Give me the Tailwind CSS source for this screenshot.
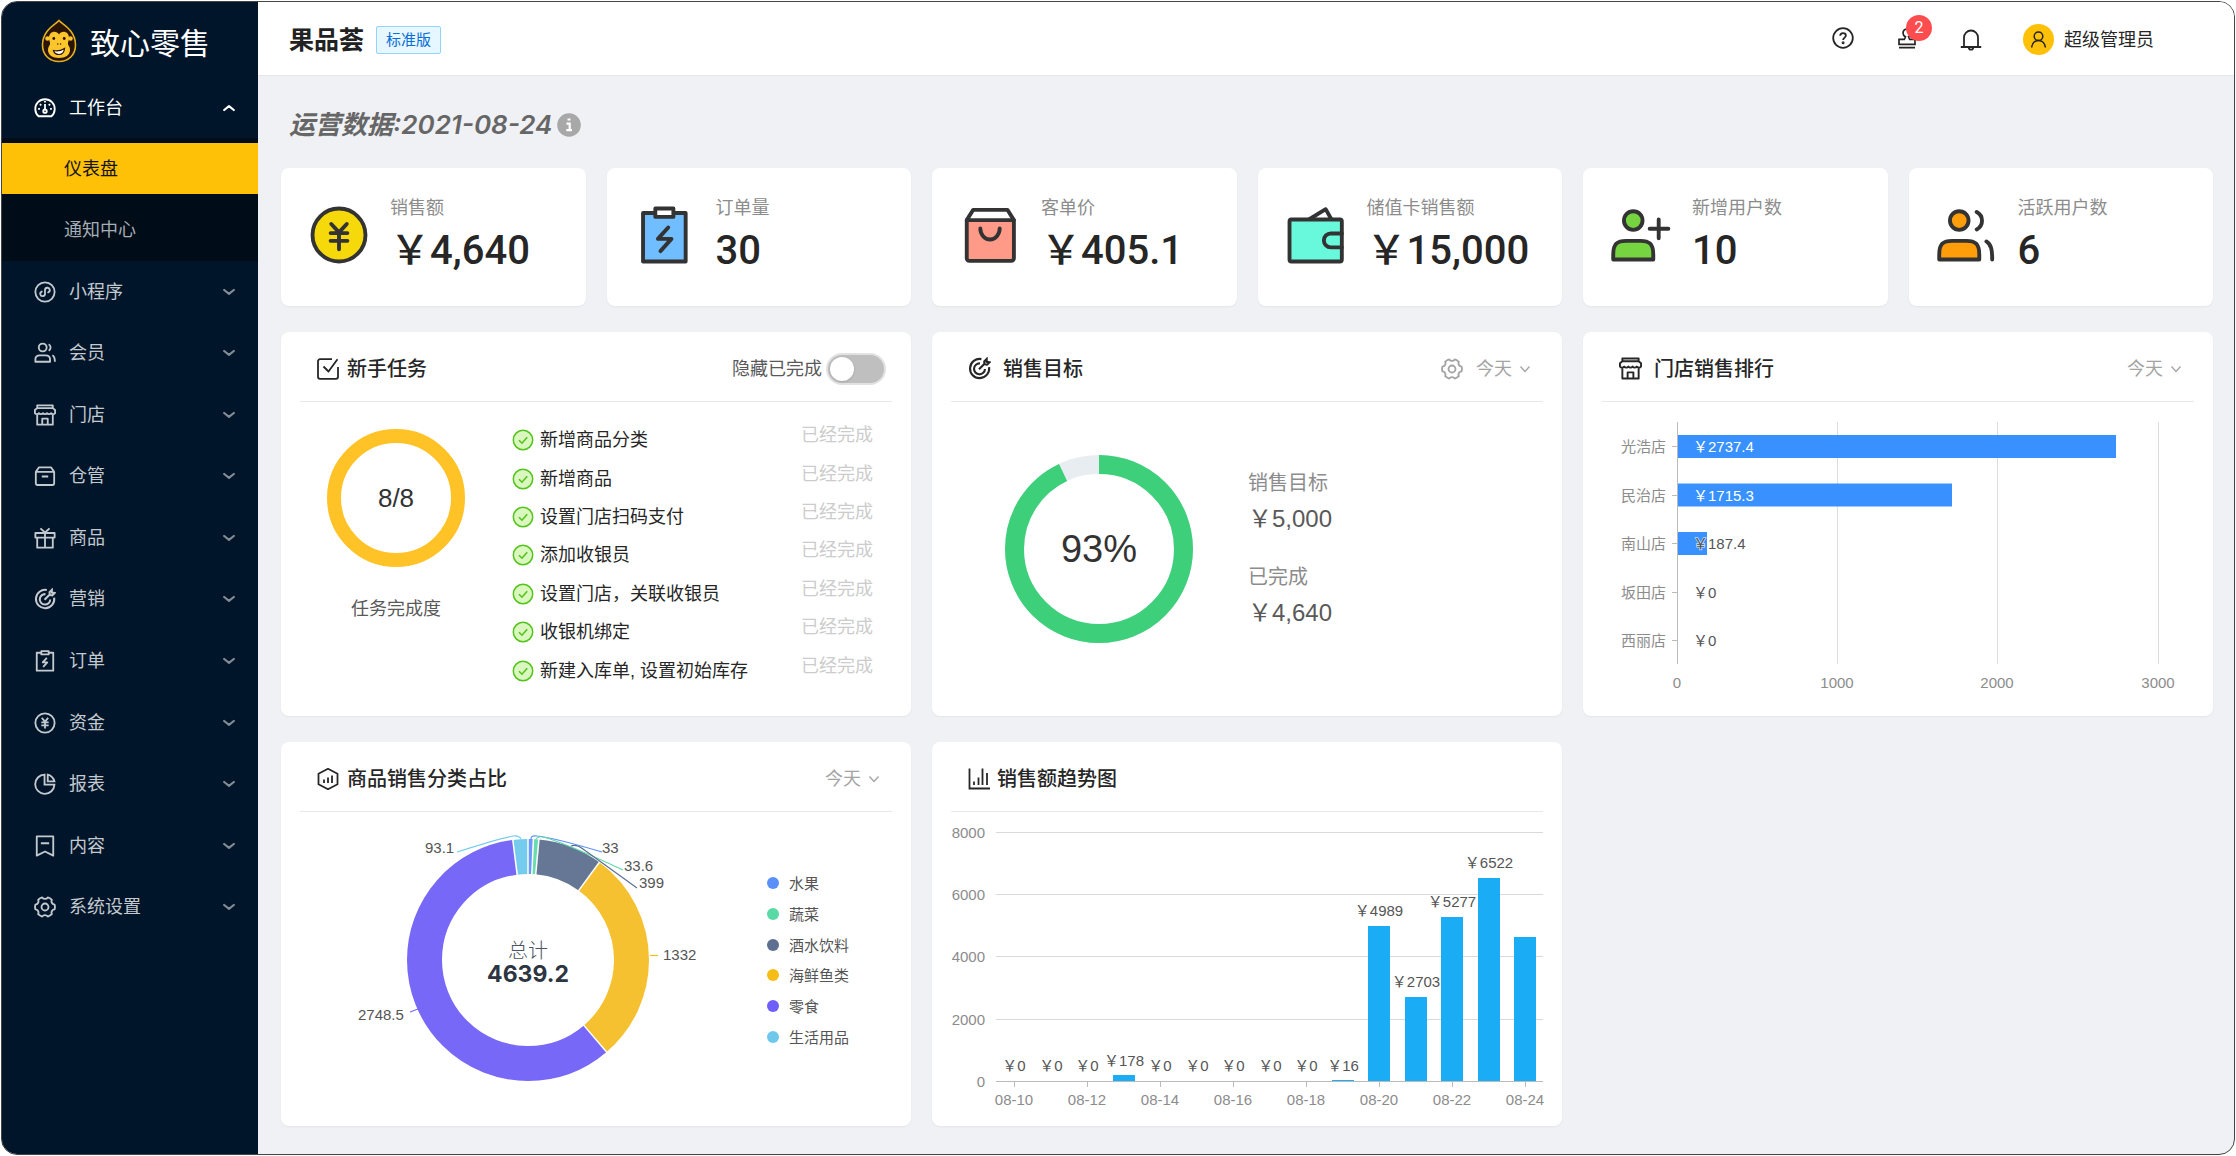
<!DOCTYPE html>
<html lang="zh-CN">
<head>
<meta charset="utf-8">
<meta name="viewport" content="width=device-width, initial-scale=1">
<title>致心零售 - 仪表盘</title>
<script src="https://cdn.jsdelivr.net/npm/@tailwindcss/browser@4"></script>
</head>
<body class="flex min-h-screen bg-white p-px font-['Liberation_Sans','Noto_Sans_CJK_SC',sans-serif] text-[18px] leading-7 text-[#262626]">

<!-- Icon sprite -->
<svg class="hidden" aria-hidden="true">
  <defs>
    <symbol id="i-down" viewBox="0 0 12 12"><path d="M1.200 4l4.800 3.800L10.800 4" fill="none" stroke="currentColor" stroke-width="2.200" stroke-linecap="round" stroke-linejoin="round"/></symbol>
    <symbol id="i-thin-down" viewBox="0 0 12 12"><path d="M1.500 3.500L6 8.500l4.500-5" fill="none" stroke="currentColor" stroke-width="1.300"/></symbol>
    <symbol id="i-dash" viewBox="0 0 24 24"><g fill="none" stroke="currentColor" stroke-width="2"><path d="M5 21a10.600 10.600 0 1 1 14 0z" stroke-linejoin="round"/><circle cx="12" cy="15.500" r="1.900"/><path d="M12 13.500V7.500"/><path d="M12 4.300v1.700M4.500 13h2M17.500 13h2M6.500 7.800l1.400 1.400M17.500 7.800l-1.400 1.400"/></g></symbol>
    <symbol id="i-mini" viewBox="0 0 24 24"><g fill="none" stroke="currentColor" stroke-width="2"><circle cx="12" cy="12" r="10.500"/><path d="M8.500 11.500a2.600 2.600 0 1 0 3.500 2.400V10a2.600 2.600 0 1 1 3.500 2.400" stroke-linecap="round"/></g></symbol>
    <symbol id="i-users" viewBox="0 0 24 24"><g fill="none" stroke="currentColor" stroke-width="2"><circle cx="9.500" cy="6" r="4.300"/><path d="M1.500 21.500v-2.500c0-3.500 1.500-4.500 5-4.500h6c3.500 0 5 1 5 4.500v2.500z" stroke-linejoin="round"/><path d="M16 2.500c2.800 1.500 2.800 5.500 0 7M20 14.500c2 1 2.800 3 2.800 7"/></g></symbol>
    <symbol id="i-store" viewBox="0 0 24 24"><g fill="none" stroke="currentColor" stroke-width="2" stroke-linejoin="round"><path d="M3.500 11v11.500h17V11M3.500 1.500h17v3h-17zM3.500 4.500L1 6.500v3.500c1 1.500 3 1.500 4.400 0 1.200 1.500 3.200 1.500 4.400 0 1.200 1.500 3.200 1.500 4.400 0 1.200 1.500 3.200 1.500 4.400 0 1.400 1.500 3.400 1.500 4.400 0V6.500l-2.500-2M9 22.500V16h6v6.500"/></g></symbol>
    <symbol id="i-box" viewBox="0 0 24 24"><g fill="none" stroke="currentColor" stroke-width="2" stroke-linejoin="round"><path d="M2 7.500h20V20c0 1-.5 1.800-1.800 1.800H3.800C2.500 21.800 2 21 2 20zM2 7.500l3.500-5h13l3.500 5M8.500 12.500h7"/></g></symbol>
    <symbol id="i-gift" viewBox="0 0 24 24"><g fill="none" stroke="currentColor" stroke-width="2" stroke-linejoin="round"><path d="M1.500 6.500h21v5h-21zM3.500 11.500h17v11h-17zM12 6.500v16M7 1.500l5 4.500 5-4.500"/></g></symbol>
    <symbol id="i-target" viewBox="0 0 24 24"><g fill="none" stroke="currentColor" stroke-width="2.200"><path d="M14 2.200A10 10 0 1 0 22 10.500"/><path d="M12.500 6.700a5.700 5.700 0 1 0 5.200 5.800"/><path d="M11.500 12.800l6-6M17 7.500V4.500l2.500-2.500v3l3 .5-2.500 2.500z"/></g></symbol>
    <symbol id="i-order" viewBox="0 0 24 24"><g fill="none" stroke="currentColor" stroke-width="2" stroke-linejoin="round"><path d="M8 3H3v19.500h18V3h-5M8 1.300h8v3.500H8zM14 8.500l-4.500 5h5L10 18.500"/></g></symbol>
    <symbol id="i-yen" viewBox="0 0 24 24"><g fill="none" stroke="currentColor" stroke-width="2"><circle cx="12" cy="12" r="10.500"/><path d="M8.500 6.500L12 10.500l3.500-4M8 11.300h8M8 14.600h8M12 10.500V18"/></g></symbol>
    <symbol id="i-pie" viewBox="0 0 24 24"><g fill="none" stroke="currentColor" stroke-width="2"><path d="M11.500 1.700A10.500 10.500 0 1 0 22.300 12.700H11.500z"/><path d="M15 1.800V9.200h7.300C21.300 5.500 18.700 2.800 15 1.800z"/></g></symbol>
    <symbol id="i-mark" viewBox="0 0 24 24"><g fill="none" stroke="currentColor" stroke-width="2" stroke-linejoin="round"><path d="M3 1.500h18v21l-9-4.500-9 4.500zM7.500 9h9"/></g></symbol>
    <symbol id="i-gear" viewBox="0 0 24 24"><g fill="none" stroke="currentColor" stroke-width="2" stroke-linejoin="round"><path d="M22.500 9.400A10.800 10.800 0 0 1 22.500 14.600A3.600 3.600 0 0 0 19.500 19.800A10.800 10.800 0 0 1 15 22.400A3.600 3.600 0 0 0 9 22.400A10.800 10.800 0 0 1 4.500 19.800A3.600 3.600 0 0 0 1.500 14.600A10.800 10.800 0 0 1 1.500 9.400A3.600 3.600 0 0 0 4.500 4.200A10.800 10.800 0 0 1 9 1.600A3.600 3.600 0 0 0 15 1.600A10.800 10.800 0 0 1 19.500 4.200A3.600 3.600 0 0 0 22.500 9.400z"/><circle cx="12" cy="12" r="3.800"/></g></symbol>
    <symbol id="i-ok" viewBox="0 0 22 22"><circle cx="11" cy="11" r="9.700" fill="#d9f7be" stroke="#52c41a" stroke-width="1.500"/><path d="M7 11.200l3 3 5.200-6" fill="none" stroke="#52c41a" stroke-width="1.600"/></symbol>
  </defs>
</svg>

<div class="flex flex-1 overflow-hidden rounded-2xl border border-[#444] bg-[#f0f1f5]">

  <!-- Sidebar -->
  <aside class="w-64 shrink-0 bg-[#001529] text-[#c4c9cf]">
    <a href="#" class="flex h-[75px] items-start gap-[13px] pl-[39px] pt-[17px]">
      <svg class="h-11 w-9 shrink-0" viewBox="0 0 36 44" aria-hidden="true">
        <path d="M18 1.500C22 6 34.500 11 34.500 26 34.500 36 27.500 42.500 18 42.500S1.500 36 1.500 26C1.500 11 14 6 18 1.500z" fill="#2b1403" stroke="#e3b022" stroke-width="1.600"/>
        <circle cx="6.500" cy="19.500" r="2.300" fill="#fbc52c"/><circle cx="29.500" cy="19.500" r="2.300" fill="#fbc52c"/>
        <path d="M18 15.500c2.500-4.500 10-3.500 10 3.500 0 3-1.500 4-1 6.500 1 2 2 3 2 5.500 0 5-4.500 8-11 8S7 36 7 31c0-2.500 1-3.500 2-5.500.5-2.500-1-3.500-1-6.500 0-7 7.500-8 10-3.500z" fill="#fbc52c"/>
        <circle cx="12.800" cy="19.500" r="1.400" fill="#2b1403"/><circle cx="23.200" cy="19.500" r="1.400" fill="#2b1403"/>
        <circle cx="16.800" cy="25" r=".7" fill="#2b1403"/><circle cx="19.600" cy="25" r=".7" fill="#2b1403"/>
        <path d="M12.500 31.500c4 1 7.500.2 11-2-.3 3.800-2.500 6-5.500 6-2.800 0-4.800-1.300-5.500-4z" fill="#fff" stroke="#2b1403" stroke-width="1.200"/>
      </svg>
      <span class="mt-[5px] whitespace-nowrap text-[30px] leading-10 text-white">致心零售</span>
    </a>
    <nav aria-label="主菜单">
      <button type="button" class="flex h-[61px] w-full items-center gap-[13px] pl-8 pr-[23px] text-white" aria-expanded="true">
        <svg class="size-[22px]"><use href="#i-dash"/></svg><span>工作台</span><svg class="ml-auto size-3 rotate-180"><use href="#i-down"/></svg>
      </button>
      <div class="flex flex-col gap-[10px] bg-[#000c17] pb-[6px] pt-[5px]">
        <a href="#" class="flex h-[51px] items-center bg-[#ffc107] pl-[62px] text-[#141414]" aria-current="page">仪表盘</a>
        <a href="#" class="flex h-[51px] items-center pl-[62px] text-[#a6adb4]">通知中心</a>
      </div>
      <div class="grid h-[677px] auto-rows-fr">
        <button type="button" class="flex items-center gap-[13px] pl-8 pr-[23px]"><svg class="size-[22px]"><use href="#i-mini"/></svg><span>小程序</span><svg class="ml-auto size-3 text-[#838b94]"><use href="#i-down"/></svg></button>
        <button type="button" class="flex items-center gap-[13px] pl-8 pr-[23px]"><svg class="size-[22px]"><use href="#i-users"/></svg><span>会员</span><svg class="ml-auto size-3 text-[#838b94]"><use href="#i-down"/></svg></button>
        <button type="button" class="flex items-center gap-[13px] pl-8 pr-[23px]"><svg class="size-[22px]"><use href="#i-store"/></svg><span>门店</span><svg class="ml-auto size-3 text-[#838b94]"><use href="#i-down"/></svg></button>
        <button type="button" class="flex items-center gap-[13px] pl-8 pr-[23px]"><svg class="size-[22px]"><use href="#i-box"/></svg><span>仓管</span><svg class="ml-auto size-3 text-[#838b94]"><use href="#i-down"/></svg></button>
        <button type="button" class="flex items-center gap-[13px] pl-8 pr-[23px]"><svg class="size-[22px]"><use href="#i-gift"/></svg><span>商品</span><svg class="ml-auto size-3 text-[#838b94]"><use href="#i-down"/></svg></button>
        <button type="button" class="flex items-center gap-[13px] pl-8 pr-[23px]"><svg class="size-[22px]"><use href="#i-target"/></svg><span>营销</span><svg class="ml-auto size-3 text-[#838b94]"><use href="#i-down"/></svg></button>
        <button type="button" class="flex items-center gap-[13px] pl-8 pr-[23px]"><svg class="size-[22px]"><use href="#i-order"/></svg><span>订单</span><svg class="ml-auto size-3 text-[#838b94]"><use href="#i-down"/></svg></button>
        <button type="button" class="flex items-center gap-[13px] pl-8 pr-[23px]"><svg class="size-[22px]"><use href="#i-yen"/></svg><span>资金</span><svg class="ml-auto size-3 text-[#838b94]"><use href="#i-down"/></svg></button>
        <button type="button" class="flex items-center gap-[13px] pl-8 pr-[23px]"><svg class="size-[22px]"><use href="#i-pie"/></svg><span>报表</span><svg class="ml-auto size-3 text-[#838b94]"><use href="#i-down"/></svg></button>
        <button type="button" class="flex items-center gap-[13px] pl-8 pr-[23px]"><svg class="size-[22px]"><use href="#i-mark"/></svg><span>内容</span><svg class="ml-auto size-3 text-[#838b94]"><use href="#i-down"/></svg></button>
        <button type="button" class="flex items-center gap-[13px] pl-8 pr-[23px]"><svg class="size-[22px]"><use href="#i-gear"/></svg><span>系统设置</span><svg class="ml-auto size-3 text-[#838b94]"><use href="#i-down"/></svg></button>
      </div>
    </nav>
  </aside>

  <div class="flex min-w-0 flex-1 flex-col">
    <!-- Top bar -->
    <header class="flex h-[74px] items-center border-b border-[#e6e6ea] bg-white pl-[31px] pr-20 pt-[2px]">
      <h1 class="text-[25px] font-bold leading-9 text-[#222]">果品荟</h1>
      <span class="ml-3 flex h-7 items-center rounded-[2px] border border-[#91d5ff] bg-[#e6f7ff] px-[9px] text-[15px] text-[#096dd9]">标准版</span>
      <div class="ml-auto flex items-center">
        <button type="button" class="pb-1" aria-label="帮助">
          <svg class="size-[22px]" viewBox="0 0 22 22" fill="none" stroke="currentColor" stroke-width="1.800"><circle cx="11" cy="11" r="9.800"/><path d="M8.200 8.800c0-3.800 5.700-3.500 5.700-.3 0 2-2.800 2.200-2.800 4.600"/><circle cx="11.100" cy="15.700" r=".6"/></svg>
        </button>
        <button type="button" class="relative ml-[42px] pb-1" aria-label="待办">
          <svg class="size-[22px]" viewBox="0 0 22 22" fill="none" stroke="currentColor" stroke-width="1.700"><path d="M3 20.600h16M3 17.300V12.300h5.300l1.100-2.500C7.500 8.800 7 7.500 7 6a4 4 0 0 1 8 0c0 1.500-.6 2.800-2.400 3.800l1.100 2.500H19v5z"/></svg>
          <span class="absolute -top-3 left-[10px] flex size-[26px] items-center justify-center rounded-full bg-[#ff4d4f] font-['Roboto',sans-serif] text-[16px] leading-none text-white">2</span>
        </button>
        <button type="button" class="ml-[42px]" aria-label="通知">
          <svg class="h-[22px] w-[22px]" viewBox="0 0 22 22" fill="none" stroke="currentColor" stroke-width="1.800"><path d="M.8 18h20.400M4 18V8.500a7 7 0 0 1 14 0V18M8.800 18.500a2.200 2.200 0 0 0 4.400 0"/></svg>
        </button>
        <button type="button" class="ml-[41px] flex items-center gap-[10px]">
          <svg class="size-[31px]" viewBox="0 0 31 31"><circle cx="15.500" cy="15.500" r="15.500" fill="#ffc107"/><g fill="none" stroke="#222" stroke-width="1.500"><circle cx="15.500" cy="12.300" r="4.300"/><path d="M8.500 23.500c.8-4.500 3.200-7 7-7s6.200 2.500 7 7"/></g></svg>
          <span>超级管理员</span>
        </button>
      </div>
    </header>

    <main class="pb-7 pl-[23px] pr-[21px]">
      <div class="flex h-[92px] items-center gap-[5px] pl-2 pt-[6px]">
        <h2 class="font-['Inter','Noto_Sans_CJK_SC',sans-serif] text-[26px] font-semibold italic leading-9 text-[#666]">运营数据:2021-08-24</h2>
        <button type="button" aria-label="说明"><svg class="size-6" viewBox="0 0 24 24"><circle cx="12" cy="12" r="11.800" fill="#a8a8a8"/><path d="M10.500 6.500h3M9.500 10.700h3.200v6.300M9.300 17.200h5.700" fill="none" stroke="#fff" stroke-width="2.200"/></svg></button>
      </div>

      <!-- Key figures -->
      <section class="grid grid-cols-6 gap-[21px]" aria-label="运营数据">
        <div class="flex h-[138px] items-center gap-5 rounded-lg bg-white pb-[5px] pl-[27px] shadow-xs">
          <svg class="size-[62px] shrink-0" viewBox="0 0 48 48" fill="none" stroke="#333" stroke-width="3" stroke-linecap="round" stroke-linejoin="round"><circle cx="24" cy="24" r="20.500" fill="#f5d90a"/><path d="M18 15.500l6 6.500 6-6.500M17.500 22.500h13M17.500 28.500h13M24 22.500V35"/></svg>
          <div><div class="text-[#8c8c8c]">销售额</div><div class="mt-[5px] whitespace-nowrap font-['Roboto','Noto_Sans_CJK_SC',sans-serif] text-[40px] font-medium leading-[48px]">￥4,640</div></div>
        </div>
        <div class="flex h-[138px] items-center gap-5 rounded-lg bg-white pb-[5px] pl-[27px] shadow-xs">
          <svg class="size-[62px] shrink-0" viewBox="0 0 48 48" fill="none" stroke="#333" stroke-width="3" stroke-linecap="round" stroke-linejoin="round"><path d="M7 7h33v37.500H7z" fill="#70bdff"/><path d="M16.500 3.500h14V10h-14z" fill="#fff"/><path d="M26.500 18.200L18.500 27H29l-8.500 9.500"/></svg>
          <div><div class="text-[#8c8c8c]">订单量</div><div class="mt-[5px] whitespace-nowrap font-['Roboto','Noto_Sans_CJK_SC',sans-serif] text-[40px] font-medium leading-[48px]">30</div></div>
        </div>
        <div class="flex h-[138px] items-center gap-5 rounded-lg bg-white pb-[5px] pl-[27px] shadow-xs">
          <svg class="size-[62px] shrink-0" viewBox="0 0 48 48" fill="none" stroke="#333" stroke-width="3" stroke-linecap="round" stroke-linejoin="round"><path d="M6 12.500L11 4.500h26.500l5 8" fill="#fff"/><path d="M6 12.500h36.500V42a2 2 0 0 1-2 2H8a2 2 0 0 1-2-2z" fill="#ff9a88"/><path d="M16.500 19c0 4.500 3.300 8.500 7.500 8.500s7.500-4 7.500-8.500"/></svg>
          <div><div class="text-[#8c8c8c]">客单价</div><div class="mt-[5px] whitespace-nowrap font-['Roboto','Noto_Sans_CJK_SC',sans-serif] text-[40px] font-medium leading-[48px]">￥405.1</div></div>
        </div>
        <div class="flex h-[138px] items-center gap-5 rounded-lg bg-white pb-[5px] pl-[27px] shadow-xs">
          <svg class="size-[62px] shrink-0" viewBox="0 0 48 48" fill="none" stroke="#333" stroke-width="3" stroke-linecap="round" stroke-linejoin="round"><path d="M18.500 12l13-8L36 12" fill="#fff"/><path d="M5 12h37.500q1.500 0 1.500 1.500V43q0 1.500-1.500 1.500H5q-1.500 0-1.500-1.500V13.500Q3.500 12 5 12z" fill="#68f9dc"/><path d="M44 22.800h-8.500a5.400 5.400 0 0 0 0 10.800H44"/></svg>
          <div><div class="text-[#8c8c8c]">储值卡销售额</div><div class="mt-[5px] whitespace-nowrap font-['Roboto','Noto_Sans_CJK_SC',sans-serif] text-[40px] font-medium leading-[48px]">￥15,000</div></div>
        </div>
        <div class="flex h-[138px] items-center gap-5 rounded-lg bg-white pb-[5px] pl-[27px] shadow-xs">
          <svg class="size-[62px] shrink-0" viewBox="0 0 48 48" fill="none" stroke="#333" stroke-width="3" stroke-linecap="round" stroke-linejoin="round"><circle cx="18" cy="12.800" r="7.200" fill="#76d441"/><path d="M2.500 43v-4c0-8 3-10.500 10-10.500h11c7 0 10 2.500 10 10.500v4z" fill="#76d441"/><path d="M37.700 12v14.500M30.700 19.200h14.500"/></svg>
          <div><div class="text-[#8c8c8c]">新增用户数</div><div class="mt-[5px] whitespace-nowrap font-['Roboto','Noto_Sans_CJK_SC',sans-serif] text-[40px] font-medium leading-[48px]">10</div></div>
        </div>
        <div class="flex h-[138px] items-center gap-5 rounded-lg bg-white pb-[5px] pl-[27px] shadow-xs">
          <svg class="size-[62px] shrink-0" viewBox="0 0 48 48" fill="none" stroke="#333" stroke-width="3" stroke-linecap="round" stroke-linejoin="round"><circle cx="18" cy="12.800" r="7.200" fill="#ff9d0a"/><path d="M2.500 43v-4c0-8 3-10.500 10-10.500h11c7 0 10 2.500 10 10.500v4z" fill="#ff9d0a"/><path d="M31.500 6.200c5.500 3 5.500 10.500 0 13.500M39 29c4 2.500 4.500 7 4.500 14"/></svg>
          <div><div class="text-[#8c8c8c]">活跃用户数</div><div class="mt-[5px] whitespace-nowrap font-['Roboto','Noto_Sans_CJK_SC',sans-serif] text-[40px] font-medium leading-[48px]">6</div></div>
        </div>
      </section>

      <div class="mt-[26px] grid grid-cols-3 gap-x-[21px] gap-y-[26px]">
        <!-- Beginner tasks -->
        <section class="h-96 rounded-lg bg-white shadow-xs">
          <div class="mx-[19px] flex h-[70px] items-center border-b border-[#e8e8e8] pl-[17px] pr-2 pt-1">
            <svg class="size-[22px]" viewBox="0 0 22 22" fill="none" stroke="currentColor" stroke-width="1.800"><path d="M15 1.200H3a2 2 0 0 0-2 2v15.600a2 2 0 0 0 2 2h16a2 2 0 0 0 2-2V9M6.500 8.500l5 5L20.500 1.200" stroke-linejoin="round"/></svg>
            <h3 class="ml-2 text-[20px] font-medium">新手任务</h3>
            <label for="hide-done" class="ml-auto mr-[6px] text-[#595959]">隐藏已完成</label>
            <span class="relative flex">
              <input id="hide-done" type="checkbox" role="switch" class="h-7 w-14 appearance-none rounded-full bg-[#bfbfbf] ring-2 ring-[#e2e2e2]">
              <span class="pointer-events-none absolute left-[2px] top-[2px] size-6 rounded-full bg-white shadow-sm"></span>
            </span>
          </div>
          <div class="flex pl-[46px] pr-[38px]">
            <div class="flex w-[138px] shrink-0 flex-col items-center pt-[27px]">
              <div class="relative">
                <svg class="size-[138px]" viewBox="0 0 138 138"><circle cx="69" cy="69" r="62" fill="none" stroke="#ffc328" stroke-width="14"/></svg>
                <div class="absolute inset-0 flex items-center justify-center text-[26px] text-[#333]">8/8</div>
              </div>
              <div class="mt-7 text-[#595959]">任务完成度</div>
            </div>
            <ul class="ml-[47px] mt-[19px] grid h-[269px] flex-1 auto-rows-fr">
              <li class="flex items-center gap-[6px]"><svg class="size-[22px]"><use href="#i-ok"/></svg><span>新增商品分类</span><span class="ml-auto pb-[10px] text-[#ccc]">已经完成</span></li>
              <li class="flex items-center gap-[6px]"><svg class="size-[22px]"><use href="#i-ok"/></svg><span>新增商品</span><span class="ml-auto pb-[10px] text-[#ccc]">已经完成</span></li>
              <li class="flex items-center gap-[6px]"><svg class="size-[22px]"><use href="#i-ok"/></svg><span>设置门店扫码支付</span><span class="ml-auto pb-[10px] text-[#ccc]">已经完成</span></li>
              <li class="flex items-center gap-[6px]"><svg class="size-[22px]"><use href="#i-ok"/></svg><span>添加收银员</span><span class="ml-auto pb-[10px] text-[#ccc]">已经完成</span></li>
              <li class="flex items-center gap-[6px]"><svg class="size-[22px]"><use href="#i-ok"/></svg><span>设置门店，关联收银员</span><span class="ml-auto pb-[10px] text-[#ccc]">已经完成</span></li>
              <li class="flex items-center gap-[6px]"><svg class="size-[22px]"><use href="#i-ok"/></svg><span>收银机绑定</span><span class="ml-auto pb-[10px] text-[#ccc]">已经完成</span></li>
              <li class="flex items-center gap-[6px]"><svg class="size-[22px]"><use href="#i-ok"/></svg><span>新建入库单, 设置初始库存</span><span class="ml-auto pb-[10px] text-[#ccc]">已经完成</span></li>
            </ul>
          </div>
        </section>

        <!-- Sales target -->
        <section class="h-96 rounded-lg bg-white shadow-xs">
          <div class="mx-[19px] flex h-[70px] items-center border-b border-[#e8e8e8] pl-[17px] pr-3 pt-1">
            <svg class="size-[23px]"><use href="#i-target"/></svg>
            <h3 class="ml-3 text-[20px] font-medium">销售目标</h3>
            <button type="button" class="ml-auto text-[#a3a3a3]" aria-label="设置销售目标"><svg class="size-[22px]"><use href="#i-gear"/></svg></button>
            <div class="ml-[13px] flex items-center gap-[7px] text-[#a3a3a3]">
              <select class="w-9 appearance-none leading-7" aria-label="销售目标时间范围"><option>今天</option></select><svg class="size-3"><use href="#i-thin-down"/></svg>
            </div>
          </div>
          <div class="flex items-center pl-[73px] pt-[53px]">
            <div class="relative">
              <svg class="size-[188px] -rotate-90" viewBox="0 0 188 188" fill="none" stroke-width="19"><circle cx="94" cy="94" r="84.500" stroke="#e8edf2"/><circle cx="94" cy="94" r="84.500" stroke="#3dcf79" pathLength="100" stroke-dasharray="93 100"/></svg>
              <div class="absolute inset-0 flex items-center justify-center text-[38px] text-[#333]">93%</div>
            </div>
            <dl class="ml-[55px]">
              <dt class="text-[20px] leading-8 text-[#8c8c8c]">销售目标</dt><dd class="mt-[2px] text-[24px] leading-9 text-[#595959]">￥5,000</dd>
              <dt class="mt-6 text-[20px] leading-8 text-[#8c8c8c]">已完成</dt><dd class="mt-[2px] text-[24px] leading-9 text-[#595959]">￥4,640</dd>
            </dl>
          </div>
        </section>

        <!-- Store ranking -->
        <section class="h-96 rounded-lg bg-white shadow-xs">
          <div class="mx-[19px] flex h-[70px] items-center border-b border-[#e8e8e8] pl-[17px] pr-3 pt-1">
            <svg class="size-[23px]"><use href="#i-store"/></svg>
            <h3 class="ml-3 text-[20px] font-medium">门店销售排行</h3>
            <div class="ml-auto flex items-center gap-[7px] text-[#a3a3a3]">
              <select class="w-9 appearance-none leading-7" aria-label="门店销售排行时间范围"><option>今天</option></select><svg class="size-3"><use href="#i-thin-down"/></svg>
            </div>
          </div>
          <svg class="w-full text-[15px]" viewBox="0 0 630 314" role="img" aria-label="门店销售排行">
            <g stroke="#ddd"><path d="M254.500 20v242M414.500 20v242M575.500 20v242"/></g>
            <g fill="#3891ff"><path d="M94 33h439v23H94zM94 81.500h275v23H94zM94 130h30v23H94z"/></g>
            <path d="M94.500 20v242M89 44.500h5M89 93.500h5M89 141.500h5M89 190.500h5M89 238.500h5" stroke="#bbb"/>
            <g fill="#8c8c8c" text-anchor="end"><text x="83" y="50">光浩店</text><text x="83" y="99">民治店</text><text x="83" y="147">南山店</text><text x="83" y="196">坂田店</text><text x="83" y="244">西丽店</text></g>
            <g fill="#fff"><text x="110" y="50">￥2737.4</text><text x="110" y="99">￥1715.3</text></g>
            <g fill="#555"><text x="110" y="147" stroke="#fff" stroke-opacity=".7" stroke-width="1.500" paint-order="stroke">￥187.4</text><text x="110" y="196">￥0</text><text x="110" y="244">￥0</text></g>
            <g fill="#8c8c8c" text-anchor="middle"><text x="94" y="286">0</text><text x="254" y="286">1000</text><text x="414" y="286">2000</text><text x="575" y="286">3000</text></g>
          </svg>
        </section>

        <!-- Category share -->
        <section class="h-96 rounded-lg bg-white shadow-xs">
          <div class="mx-[19px] flex h-[70px] items-center border-b border-[#e8e8e8] pl-[17px] pr-3 pt-1">
            <svg class="size-[22px]" viewBox="0 0 22 22" fill="none" stroke="currentColor" stroke-width="1.800" stroke-linejoin="round"><path d="M11 .8l9.500 5v10.400l-9.500 5-9.500-5V5.800zM7 11.500v3.500M11 9.500V15M15 7.500V15"/></svg>
            <h3 class="ml-2 text-[20px] font-medium">商品销售分类占比</h3>
            <div class="ml-auto flex items-center gap-[7px] text-[#a3a3a3]">
              <select class="w-9 appearance-none leading-7" aria-label="商品销售分类占比时间范围"><option>今天</option></select><svg class="size-3"><use href="#i-thin-down"/></svg>
            </div>
          </div>
          <svg class="w-full text-[15px]" viewBox="0 0 630 314" role="img" aria-label="商品销售分类占比">
            <g transform="rotate(-90 247 148)" fill="none" stroke-width="35">
              <circle cx="247" cy="148" r="103.500" pathLength="4639.200" stroke="#6a99fa" stroke-dasharray="33 4639.200"/>
              <circle cx="247" cy="148" r="103.500" pathLength="4639.200" stroke="#69dcaf" stroke-dasharray="33.600 4639.200" stroke-dashoffset="-33"/>
              <circle cx="247" cy="148" r="103.500" pathLength="4639.200" stroke="#667796" stroke-dasharray="399 4639.200" stroke-dashoffset="-66.600"/>
              <circle cx="247" cy="148" r="103.500" pathLength="4639.200" stroke="#f6c130" stroke-dasharray="1332 4639.200" stroke-dashoffset="-465.600"/>
              <circle cx="247" cy="148" r="103.500" pathLength="4639.200" stroke="#7768f8" stroke-dasharray="2748.500 4639.200" stroke-dashoffset="-1797.600"/>
              <circle cx="247" cy="148" r="103.500" pathLength="4639.200" stroke="#75cbed" stroke-dasharray="93.100 4639.200" stroke-dashoffset="-4546.100"/>
            </g>
            <g stroke="#fff" stroke-width="1.500"><path d="M247 26v38"/><path d="M247 26v38" transform="rotate(2.560 247 148)"/><path d="M247 26v38" transform="rotate(5.170 247 148)"/><path d="M247 26v38" transform="rotate(36.130 247 148)"/><path d="M247 26v38" transform="rotate(139.490 247 148)"/><path d="M247 26v38" transform="rotate(352.780 247 148)"/></g>
            <g fill="none" stroke-width="1.200"><path d="M240 27q-2-4-8-3-12 2-56 16" stroke="#75cbed"/><path d="M250 27q0-4 6-3 14 1 65 16" stroke="#5b8ff9"/><path d="M255 27q2-3 7-2 20 5 80 33" stroke="#5ad8a6"/><path d="M290 34q5-2 12 3l54 39" stroke="#5d7092"/><path d="M369 143.500h8" stroke="#f6bd16"/><path d="M137 197l-8 3" stroke="#7768f8"/></g>
            <g fill="#555"><text x="144" y="41">93.1</text><text x="321" y="41">33</text><text x="343" y="59">33.6</text><text x="358" y="76">399</text><text x="382" y="148">1332</text><text x="77" y="208">2748.5</text></g>
            <text x="247" y="146" text-anchor="middle" class="text-[20px] font-light" fill="#4b535e">总计</text>
            <text x="247" y="170" text-anchor="middle" class="font-['Inter',sans-serif] text-[23px] font-bold" fill="#2c3542">4639.2</text>
            <g><circle cx="492" cy="71" r="6" fill="#5b8ff9"/><circle cx="492" cy="102" r="6" fill="#5ad8a6"/><circle cx="492" cy="133" r="6" fill="#5d7092"/><circle cx="492" cy="163" r="6" fill="#f6bd16"/><circle cx="492" cy="194" r="6" fill="#6f5ef9"/><circle cx="492" cy="225" r="6" fill="#6dc8ec"/></g>
            <g fill="#555"><text x="508" y="77">水果</text><text x="508" y="108">蔬菜</text><text x="508" y="139">酒水饮料</text><text x="508" y="169">海鲜鱼类</text><text x="508" y="200">零食</text><text x="508" y="231">生活用品</text></g>
          </svg>
        </section>

        <!-- Sales trend -->
        <section class="h-96 rounded-lg bg-white shadow-xs">
          <div class="mx-[19px] flex h-[70px] items-center border-b border-[#e8e8e8] pl-[17px] pr-3 pt-1">
            <svg class="size-[22px]" viewBox="0 0 22 22" fill="none" stroke="currentColor" stroke-width="1.800"><path d="M1.500.5v20H22M6 13.500V17M10.500 9.500V17M14.500.5V17M19 5V17"/></svg>
            <h3 class="ml-[7px] text-[20px] font-medium">销售额趋势图</h3>
          </div>
          <svg class="w-full text-[15px]" viewBox="0 0 630 314" role="img" aria-label="销售额趋势图">
            <path d="M64 20.500h547M64 82.500h547M64 144.500h547M64 207.500h547" stroke="#d9d9d9"/>
            <g fill="#1aadf6"><path d="M181 263h22v6h-22zM400 268h22v1h-22zM436 114h22v155h-22zM473 185h22v84h-22zM509 105h22v164h-22zM546 66h22v203h-22zM582 125h22v144h-22z"/></g>
            <path d="M64 269.500h547M82.500 270v5M155.500 270v5M228.500 270v5M301.500 270v5M374.500 270v5M447.500 270v5M520.500 270v5M593.500 270v5" stroke="#bbb"/>
            <g fill="#8c8c8c" text-anchor="end"><text x="53" y="26">8000</text><text x="53" y="88">6000</text><text x="53" y="150">4000</text><text x="53" y="213">2000</text><text x="53" y="275">0</text></g>
            <g fill="#8c8c8c" text-anchor="middle"><text x="82" y="293">08-10</text><text x="155" y="293">08-12</text><text x="228" y="293">08-14</text><text x="301" y="293">08-16</text><text x="374" y="293">08-18</text><text x="447" y="293">08-20</text><text x="520" y="293">08-22</text><text x="593" y="293">08-24</text></g>
            <g fill="#555" text-anchor="middle"><text x="82" y="259">￥0</text><text x="119" y="259">￥0</text><text x="155" y="259">￥0</text><text x="192" y="254">￥178</text><text x="228" y="259">￥0</text><text x="265" y="259">￥0</text><text x="301" y="259">￥0</text><text x="338" y="259">￥0</text><text x="374" y="259">￥0</text><text x="411" y="259">￥16</text><text x="447" y="104">￥4989</text><text x="484" y="175">￥2703</text><text x="520" y="95">￥5277</text><text x="557" y="56">￥6522</text></g>
          </svg>
        </section>
      </div>
    </main>
  </div>
</div>
</body>
</html>
